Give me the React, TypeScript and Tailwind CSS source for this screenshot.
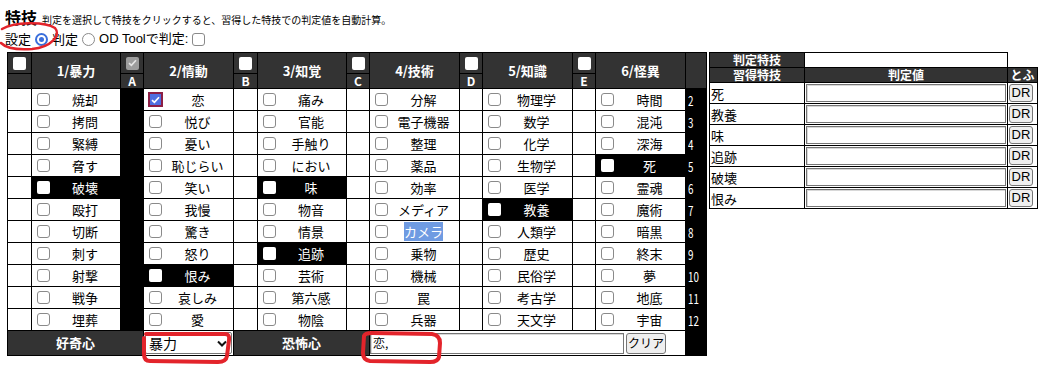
import React from 'react';

const categories = ['1/暴力', '2/情動', '3/知覚', '4/技術', '5/知識', '6/怪異'];
const gaps = ['', 'A', 'B', 'C', 'D', 'E'];

const skills = [
  ['焼却', '恋', '痛み', '分解', '物理学', '時間'],
  ['拷問', '悦び', '官能', '電子機器', '数学', '混沌'],
  ['緊縛', '憂い', '手触り', '整理', '化学', '深海'],
  ['脅す', '恥じらい', 'におい', '薬品', '生物学', '死'],
  ['破壊', '笑い', '味', '効率', '医学', '霊魂'],
  ['殴打', '我慢', '物音', 'メディア', '教養', '魔術'],
  ['切断', '驚き', '情景', 'カメラ', '人類学', '暗黒'],
  ['刺す', '怒り', '追跡', '乗物', '歴史', '終末'],
  ['射撃', '恨み', '芸術', '機械', '民俗学', '夢'],
  ['戦争', '哀しみ', '第六感', '罠', '考古学', '地底'],
  ['埋葬', '愛', '物陰', '兵器', '天文学', '宇宙'],
];

const learned = ['死', '教養', '味', '追跡', '破壊', '恨み'];

type BoxKind = 'plain' | 'white' | 'checked' | 'disabled';

const Box: React.FC<{ kind: BoxKind }> = ({ kind }) => {
  if (kind === 'checked') {
    return (
      <span className="ml-[4px] flex h-[15px] w-[15px] shrink-0 items-center justify-center border-2 border-[#8c1f45] bg-[#4f6fe0]">
        <svg width="9" height="8" viewBox="0 0 9 8">
          <path d="M1 4.2 L3.4 6.4 L8 1.3" stroke="#fff" strokeWidth="1.7" fill="none" />
        </svg>
      </span>
    );
  }
  if (kind === 'disabled') {
    return (
      <span className="flex h-[13px] w-[13px] shrink-0 items-center justify-center rounded-[2px] bg-[#9d9d9d]">
        <svg width="9" height="8" viewBox="0 0 9 8">
          <path d="M1 4.2 L3.4 6.4 L8 1.3" stroke="#e4e4e4" strokeWidth="1.7" fill="none" />
        </svg>
      </span>
    );
  }
  if (kind === 'white') {
    return <span className="ml-[5px] block h-[13px] w-[13px] shrink-0 rounded-[2px] bg-white" />;
  }
  return <span className="ml-[5px] block h-[13px] w-[13px] shrink-0 rounded-[3px] border border-[#8a8a8a] bg-white" />;
};

const Radio: React.FC<{ on?: boolean }> = ({ on }) =>
  on ? (
    <span className="mx-[4px] flex h-[13px] w-[13px] items-center justify-center rounded-full border-2 border-[#3a6fdc] bg-white">
      <span className="block h-[5px] w-[5px] rounded-full bg-[#3a6fdc]" />
    </span>
  ) : (
    <span className="mx-[4px] block h-[13px] w-[13px] rounded-full border border-[#8a8a8a] bg-white" />
  );

const SkillCell: React.FC<{ name: string }> = ({ name }) => {
  const hl = learned.includes(name);
  const cls = hl ? 'bg-black text-white' : 'bg-white text-black';
  return (
    <td className={`h-[22px] border border-black p-0 ${cls}`}>
      <div className="flex items-center">
        <Box kind={name === '恋' ? 'checked' : hl ? 'white' : 'plain'} />
        <span className="flex-1 text-center text-[13px] leading-[15px]">
          {name === 'カメラ' ? <span className="bg-[#6f9be2] text-white">{name}</span> : name}
        </span>
      </div>
    </td>
  );
};

const App: React.FC = () => {
  return (
    <div className="relative h-[367px] w-[1060px] overflow-hidden bg-white font-['Noto_Sans_CJK_JP',sans-serif] text-black">
      {/* Title */}
      <div className="pl-[5px] pt-[6px]">
        <div className="flex h-[22px] items-baseline">
          <span className="text-[16px] font-bold leading-[22px]">特技</span>
          <span className="ml-[5px] text-[10px]">判定を選択して特技をクリックすると、習得した特技での判定値を自動計算。</span>
        </div>
        <div className="flex h-[22px] items-center text-[13px]">
          <span>設定</span>
          <Radio on />
          <span>判定</span>
          <Radio />
          <span className="font-['Liberation_Sans','Noto_Sans_CJK_JP',sans-serif]">OD Toolで判定:</span>
          <span className="ml-[4px] block h-[13px] w-[13px] rounded-[3px] border border-[#8a8a8a] bg-white" />
        </div>
      </div>

      <div className="mt-[2px] flex items-start pl-[7px]">
        {/* Skill table */}
        <table className="w-[699px] table-fixed border-collapse border border-black">
          <colgroup>
            <col className="w-[24px]" />
            <col className="w-[89px]" />
            <col className="w-[23px]" />
            <col className="w-[90px]" />
            <col className="w-[24px]" />
            <col className="w-[89px]" />
            <col className="w-[23px]" />
            <col className="w-[90px]" />
            <col className="w-[23px]" />
            <col className="w-[90px]" />
            <col className="w-[23px]" />
            <col className="w-[90px]" />
            <col className="w-[21px]" />
          </colgroup>
          <thead>
            <tr className="h-[21px]">
              {categories.map((c, i) => (
                <React.Fragment key={c}>
                  <td className="border border-black bg-[#333] p-0">
                    <div className="flex justify-center">
                      {i === 1 ? <Box kind="disabled" /> : <span className="block h-[13px] w-[13px] rounded-[2px] bg-white" />}
                    </div>
                  </td>
                  <td rowSpan={2} className="border border-black bg-[#333] p-0 text-center text-[13px] font-bold text-white">
                    {c}
                  </td>
                </React.Fragment>
              ))}
              <td rowSpan={2} className="border border-black bg-[#333] p-0" />
            </tr>
            <tr className="h-[15px]">
              {gaps.map((g, i) => (
                <td key={i} className="border border-black bg-[#333] p-0 text-center text-[12px] font-bold leading-none text-white">
                  {g}
                </td>
              ))}
            </tr>
          </thead>
          <tbody>
            {skills.map((row, r) => (
              <tr key={r}>
                {row.map((name, c) => (
                  <React.Fragment key={name}>
                    <td className={`border border-black p-0 ${c === 1 ? 'bg-black' : 'bg-white'}`} />
                    <SkillCell name={name} />
                  </React.Fragment>
                ))}
                <td className="border border-black bg-black p-0 pl-[2px] text-[14px] leading-none text-white">
                  <span className="inline-block origin-left scale-x-[0.7]">{r + 2}</span>
                </td>
              </tr>
            ))}
            <tr className="h-[25px]">
              <td colSpan={3} className="border border-black bg-[#333] p-0 text-center text-[13px] font-bold text-white">
                好奇心
              </td>
              <td className="border border-black bg-white p-0 px-[1px]">
                <div className="flex h-[22px] items-center justify-between rounded-[2px] border border-[#767676] bg-white pl-[3px] pr-[4px] text-[14px]">
                  <span>暴力</span>
                  <svg width="10" height="7" viewBox="0 0 10 7">
                    <path d="M1 1.5 L5 5.5 L9 1.5" stroke="#111" strokeWidth="2" fill="none" />
                  </svg>
                </div>
              </td>
              <td colSpan={3} className="border border-black bg-[#333] p-0 text-center text-[13px] font-bold text-white">
                恐怖心
              </td>
              <td colSpan={5} className="border border-black bg-white p-0">
                <div className="flex items-center gap-[2px]">
                  <div className="flex h-[21px] w-[254px] items-center border border-[#767676] pl-[2px] text-[12px] shadow-[inset_1px_1px_0_#d8d8d8]">
                    恋,
                  </div>
                  <span className="flex h-[21px] w-[40px] items-center justify-center whitespace-nowrap rounded-[3px] border border-[#767676] bg-[#efefef] text-[12px] leading-none">
                    クリア
                  </span>
                </div>
              </td>
              <td className="border border-black bg-black p-0" />
            </tr>
          </tbody>
        </table>

        {/* Result table */}
        <table className="ml-[2px] w-[328px] table-fixed border-collapse">
          <colgroup>
            <col className="w-[95px]" />
            <col className="w-[203px]" />
            <col className="w-[30px]" />
          </colgroup>
          <tbody>
            <tr className="h-[15px]">
              <td className="h-[15px] border border-black bg-[#333] p-0 text-center text-[12px] font-bold leading-[12px] text-white">判定特技</td>
              <td className="border border-black bg-white p-0" />
              <td className="border-0 p-0" />
            </tr>
            <tr className="h-[15px]">
              <td className="h-[15px] border border-black bg-[#333] p-0 text-center text-[12px] font-bold leading-[12px] text-white">習得特技</td>
              <td className="border border-black bg-[#333] p-0 text-center text-[12px] font-bold leading-[12px] text-white">判定値</td>
              <td className="border border-black bg-[#333] p-0 text-center text-[12px] font-bold leading-[12px] text-white">とふ</td>
            </tr>
            {learned.map((name) => (
              <tr key={name} className="h-[21px]">
                <td className="border border-black p-0 pl-[1px] text-[13px] leading-none">{name}</td>
                <td className="border border-black p-0 px-[1px]">
                  <div className="h-[18px] border border-[#767676] shadow-[inset_1px_1px_0_#d8d8d8]" />
                </td>
                <td className="border border-black p-0 pl-[1px]">
                  <span className="flex h-[18px] w-[24px] items-center justify-center rounded-[3px] border border-[#767676] bg-[#efefef] font-['Liberation_Sans',sans-serif] text-[13px]">
                    DR
                  </span>
                </td>
              </tr>
            ))}
          </tbody>
        </table>
      </div>

      {/* Hand-drawn red annotations */}
      <svg className="pointer-events-none absolute inset-0" width="1060" height="367">
        <g stroke="#e3242b" fill="none" strokeLinecap="round" strokeLinejoin="round">
          <path d="M2 29 C14 22 44 21 55 28 C61 35 52 47 32 49 C18 50 6 48 1 43" strokeWidth="2.5" />
          <path d="M146 334 L225 334 Q230 334 229 340 L227 356 Q226 362 218 362 L150 361 Q144 361 144 354 L144 338" strokeWidth="4" />
          <path d="M364 336 Q365 333 372 333 L432 334 Q440 335 440 343 L439 357 Q438 362 430 362 L370 361 Q363 360 363 353 Z" strokeWidth="4" />
        </g>
      </svg>
    </div>
  );
};

export default App;
